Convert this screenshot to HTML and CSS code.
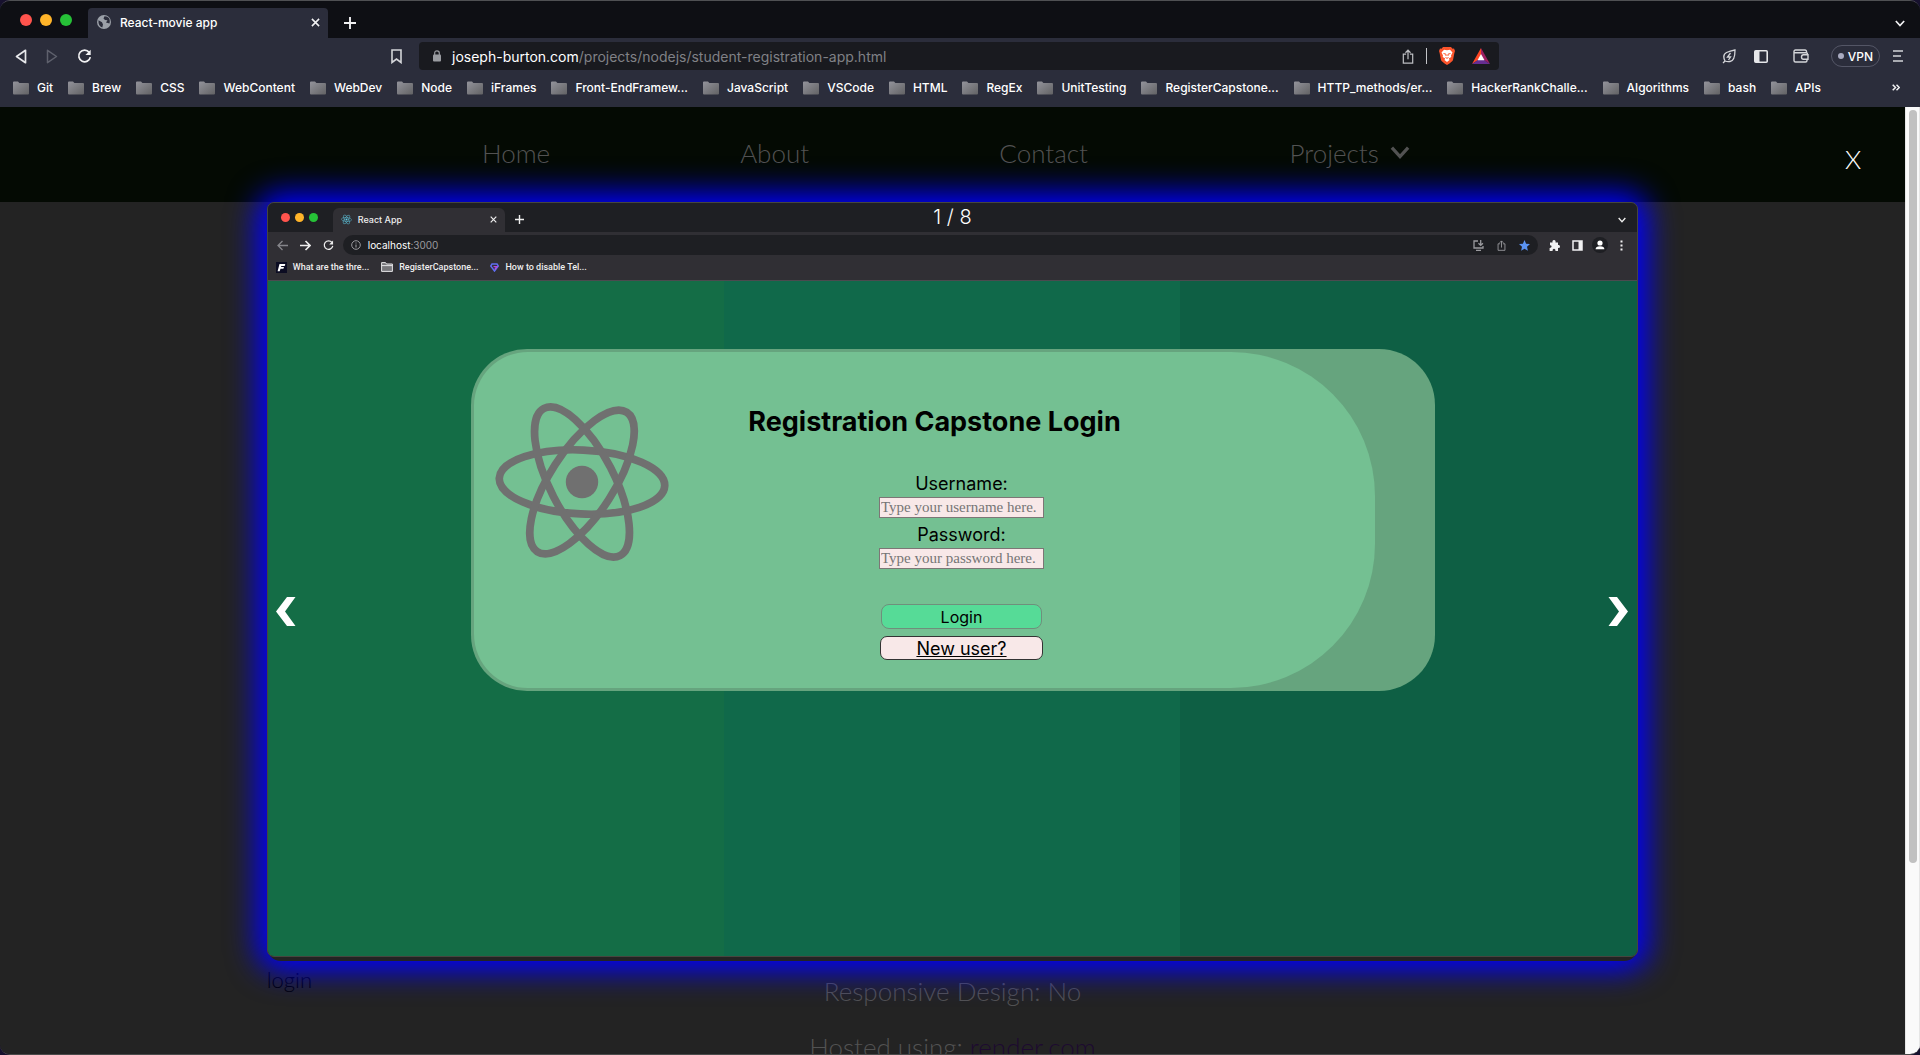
FILE: index.html
```html
<!DOCTYPE html>
<html lang="en">
<head>
<meta charset="utf-8">
<title>React-movie app</title>
<link rel="stylesheet" href="styles.css">
</head>
<body>
<svg class="defs" aria-hidden="true">
  <defs>
    <linearGradient id="folder-fill" x1="0" y1="0" x2="1" y2="1"><stop offset="0" stop-color="#93939b"/><stop offset="1" stop-color="#626264"/></linearGradient>
    <symbol id="folder" viewBox="0 0 16 14"><path d="M0 1.6Q0 .6 1 .6H5L6.4 2H15Q16 2 16 3V12.600Q16 13.600 15 13.600H1Q0 13.600 0 12.600Z" fill="url(#folder-fill)"/></symbol>
    <symbol id="close" viewBox="0 0 10 10"><path d="M1 1 9 9M9 1 1 9" stroke="currentColor" stroke-width="1.700" fill="none"/></symbol>
    <symbol id="plus" viewBox="0 0 12 12"><path d="M6 0V12M0 6H12" stroke="currentColor" stroke-width="1.900"/></symbol>
    <symbol id="chevron" viewBox="0 0 12 8"><path d="M1 1 6 6.500 11 1" stroke="currentColor" stroke-width="2" fill="none"/></symbol>
    <symbol id="reload" viewBox="0 0 16 16"><path d="M13 3.600A6.200 6.200 0 1 0 14.200 8.600" stroke="currentColor" stroke-width="1.800" fill="none"/><path d="M14.600 .8V6.400H9Z" fill="currentColor"/></symbol>
    <symbol id="share" viewBox="0 0 12 16"><path d="M4 5.500H1V15H11V5.500H8M6 11V1.500M3.300 4 6 1.300 8.700 4" stroke="currentColor" stroke-width="1.300" fill="none"/></symbol>
    <symbol id="atom" viewBox="-90 -90 180 180"><g transform="rotate(2.700)" fill="none" stroke="currentColor" stroke-width="7.700"><ellipse rx="82.800" ry="32"/><ellipse rx="82.800" ry="32" transform="rotate(60)"/><ellipse rx="82.800" ry="32" transform="rotate(120)"/></g><circle r="16.200" fill="currentColor"/></symbol>
  </defs>
</svg>
<div class="window">
  <header class="chrome">
    <div class="tabs">
      <div class="lights"><i class="red"></i><i class="amber"></i><i class="green"></i></div>
      <div class="tab">
        <svg width="14" height="14" viewBox="0 0 14 14"><circle cx="7" cy="7" r="7" fill="#9ba0a8"/><path d="M1.500 5.200 5 7.300 6 9.500 5.300 12.400Q1 11 1.500 5.200ZM7.500 1.200 6.500 3.500 8 5 10.500 5.300 9 7.500 12.500 8.500Q13.500 4 11 2.200Q9.500 1.200 7.500 1.200Z" fill="#2b2d3b"/></svg>
        <span>React-movie app</span>
        <button class="icon" aria-label="Close tab"><svg width="9" height="9"><use href="#close"/></svg></button>
      </div>
      <button class="icon new-tab" aria-label="New tab"><svg width="12" height="12"><use href="#plus"/></svg></button>
      <button class="icon tab-search" aria-label="Search tabs"><svg width="10" height="7"><use href="#chevron"/></svg></button>
    </div>
    <div class="toolbar">
      <div class="history">
        <button class="icon" aria-label="Back"><svg width="12" height="15" viewBox="0 0 12 15"><path d="M10.500 1.300V13.700L1.500 7.500Z" fill="none" stroke="#e6e7ea" stroke-width="1.700" stroke-linejoin="round"/></svg></button>
        <button class="icon" aria-label="Forward"><svg width="12" height="15" viewBox="0 0 12 15"><path d="M1.500 1.300V13.700L10.500 7.500Z" fill="none" stroke="#5e606c" stroke-width="1.500" stroke-linejoin="round"/></svg></button>
        <button class="icon" aria-label="Reload"><svg width="15" height="15"><use href="#reload"/></svg></button>
      </div>
      <button class="icon mark" aria-label="Bookmark"><svg width="11" height="15" viewBox="0 0 11 15"><path d="M1 1H10V13.500L5.500 10 1 13.500Z" fill="none" stroke="#d4d5d9" stroke-width="1.600"/></svg></button>
      <div class="address">
        <svg width="8" height="12" viewBox="0 0 8 12"><rect y="4.500" width="8" height="7" rx="1" fill="#9a9ca1"/><path d="M1.700 5V3Q1.700 .8 4 .8 6.300 .8 6.300 3V5" fill="none" stroke="#9a9ca1" stroke-width="1.200"/></svg>
        <span class="url"><b>joseph-burton.com</b>/projects/nodejs/student-registration-app.html</span>
        <svg class="share" width="12" height="15"><use href="#share"/></svg>
        <i class="rule"></i>
        <svg width="16" height="18" viewBox="0 0 16 18"><path d="M4 0H12L13.500 1.700 15 1.600 16 4 15.400 6 14 13Q13.500 14.500 8 18 2.500 14.500 2 13L.6 6 0 4 1 1.600 2.500 1.700Z" fill="#fb542b"/><path d="M5 2.700 8 3.200 11 2.700 13.500 5.500 12 8.500 12.300 10 9.800 11.500 10.500 13 8 15 5.500 13 6.200 11.500 3.700 10 4 8.500 2.500 5.500Z" fill="#fff"/><path d="M4.500 6.500 7 7.200V9M11.500 6.500 9 7.200V9M6.500 10.500 8 11.300 9.500 10.500" stroke="#fb542b" stroke-width="1" fill="none"/></svg>
        <svg class="bat" width="18" height="16" viewBox="0 0 18 16"><path d="M9 0 0 16 9 10Z" fill="#ff4724"/><path d="M9 0 18 16 9 10Z" fill="#9e1f63"/><path d="M0 16H18L9 10Z" fill="#662d91"/><path d="M9 6 12.500 12.300H5.500Z" fill="#fff"/></svg>
      </div>
      <div class="tools">
        <button class="icon" aria-label="Energy saver"><svg width="14" height="15" viewBox="0 0 14 15"><path d="M1 14 3 12Q0 6 4.500 3.500 8 2 13 1 13 12 8 12.500 5.500 13 3 12M8.500 4 5.500 8H8.500L6.500 11" fill="none" stroke="#d4d5d9" stroke-width="1.300"/></svg></button>
        <button class="icon panel" aria-label="Sidebar"><svg width="14" height="13" viewBox="0 0 14 13"><rect x=".8" y=".8" width="12.400" height="11.400" rx="1" fill="none" stroke="#e6e7ea" stroke-width="1.600"/><rect x="1" y="1" width="4.500" height="11" fill="#e6e7ea"/></svg></button>
        <button class="icon wallet" aria-label="Wallet"><svg width="16" height="14" viewBox="0 0 16 14"><path d="M13.500 4V2.500Q13.500 1 12 1H2.500Q1 1 1 2.500V11.500Q1 13 2.500 13H12.500Q14 13 14 11.500V10.500M1.500 3.700H13Q14.500 3.700 14.500 5M15 5.800H10.500Q8.500 5.800 8.500 8T10.500 10.200H15Z" fill="none" stroke="#d4d5d9" stroke-width="1.400"/></svg></button>
        <button class="vpn"><i></i>VPN</button>
        <button class="icon" aria-label="Menu"><svg width="10" height="12" viewBox="0 0 10 12"><path d="M0 1H10M0 6H8M0 11H10" stroke="#d4d5d9" stroke-width="1.700"/></svg></button>
      </div>
    </div>
    <nav class="bookmarks" aria-label="Bookmarks">
      <a href="#"><svg width="16" height="14"><use href="#folder"/></svg>Git</a>
      <a href="#"><svg width="16" height="14"><use href="#folder"/></svg>Brew</a>
      <a href="#"><svg width="16" height="14"><use href="#folder"/></svg>CSS</a>
      <a href="#"><svg width="16" height="14"><use href="#folder"/></svg>WebContent</a>
      <a href="#"><svg width="16" height="14"><use href="#folder"/></svg>WebDev</a>
      <a href="#"><svg width="16" height="14"><use href="#folder"/></svg>Node</a>
      <a href="#"><svg width="16" height="14"><use href="#folder"/></svg>iFrames</a>
      <a href="#"><svg width="16" height="14"><use href="#folder"/></svg>Front-EndFramew...</a>
      <a href="#"><svg width="16" height="14"><use href="#folder"/></svg>JavaScript</a>
      <a href="#"><svg width="16" height="14"><use href="#folder"/></svg>VSCode</a>
      <a href="#"><svg width="16" height="14"><use href="#folder"/></svg>HTML</a>
      <a href="#"><svg width="16" height="14"><use href="#folder"/></svg>RegEx</a>
      <a href="#"><svg width="16" height="14"><use href="#folder"/></svg>UnitTesting</a>
      <a href="#"><svg width="16" height="14"><use href="#folder"/></svg>RegisterCapstone...</a>
      <a href="#"><svg width="16" height="14"><use href="#folder"/></svg>HTTP_methods/er...</a>
      <a href="#"><svg width="16" height="14"><use href="#folder"/></svg>HackerRankChalle...</a>
      <a href="#"><svg width="16" height="14"><use href="#folder"/></svg>Algorithms</a>
      <a href="#"><svg width="16" height="14"><use href="#folder"/></svg>bash</a>
      <a href="#"><svg width="16" height="14"><use href="#folder"/></svg>APIs</a>
      <button class="icon more" aria-label="More bookmarks"><svg width="8" height="7" viewBox="0 0 8 7"><path d="M.7 .7 3.500 3.500 .7 6.300M4.500 .7 7.300 3.500 4.500 6.300" fill="none" stroke="currentColor" stroke-width="1.500"/></svg></button>
    </nav>
  </header>

  <div class="viewport">
    <div class="page">
      <nav class="site-nav">
        <a href="#">Home</a>
        <a href="#">About</a>
        <a href="#">Contact</a>
        <a href="#">Projects <svg width="20" height="13"><use href="#chevron"/></svg></a>
      </nav>
      <main class="details">
        <p>Responsive Design: No</p>
        <p>Hosted using: <a href="#">render.com</a></p>
      </main>

      <div class="lightbox" role="dialog" aria-label="Screenshots">
        <button class="dismiss">X</button>
        <div class="frame">
          <span class="counter">1 / 8</span>
          <section class="slide">
            <div class="mini-tabs">
              <div class="lights small"><i class="red"></i><i class="amber"></i><i class="green"></i></div>
              <div class="mini-tab">
                <svg class="favicon" width="11" height="11"><use href="#atom"/></svg>
                <span>React App</span>
                <svg width="7" height="7"><use href="#close"/></svg>
              </div>
              <svg class="mini-plus" width="9" height="9"><use href="#plus"/></svg>
              <svg class="mini-search" width="8" height="6"><use href="#chevron"/></svg>
            </div>
            <div class="mini-toolbar">
              <svg class="dim" width="11" height="11" viewBox="0 0 11 11"><path d="M11 5.500H1.500M5.500 1 1 5.500 5.500 10" fill="none" stroke="currentColor" stroke-width="1.300"/></svg>
              <svg width="11" height="11" viewBox="0 0 11 11"><path d="M0 5.500H9.500M5.500 1 10 5.500 5.500 10" fill="none" stroke="currentColor" stroke-width="1.600"/></svg>
              <svg width="11" height="11"><use href="#reload"/></svg>
              <div class="mini-address">
                <svg width="10" height="10" viewBox="0 0 10 10"><circle cx="5" cy="5" r="4.300" fill="none" stroke="currentColor"/><path d="M5 4.500V7.600M5 2.400V3.600" stroke="currentColor" stroke-width="1.100"/></svg>
                <span><b>localhost</b>:3000</span>
                <svg class="install" width="11" height="11" viewBox="0 0 11 11"><path d="M5 1H1V8H10V6M3 10.300H8M7.700 0V5M5.500 3.200 7.700 5.400 9.900 3.200" fill="none" stroke="currentColor" stroke-width="1.300"/></svg>
                <svg width="9" height="11"><use href="#share"/></svg>
                <svg class="star" width="11" height="11" viewBox="0 0 11 11"><path d="M5.500 0 7.100 3.700 11 4.100 8 6.800 8.900 10.700 5.500 8.700 2.100 10.700 3 6.800 0 4.100 3.900 3.700Z" fill="#5a93f3"/></svg>
              </div>
              <svg width="11" height="11" viewBox="0 0 11 11"><path d="M1 2.500H3.500Q3 0 5 0T6.500 2.500H9V5Q11 4.500 11 6.400T9 7.800V11H6.500Q6.500 8.800 5 8.800T3.500 11H.6V8Q2.600 8 2.600 6.600T1 5.200Z" fill="#f1f1f2"/></svg>
              <svg width="11" height="11" viewBox="0 0 11 11"><rect x="1" y="1" width="9" height="9" fill="none" stroke="#f1f1f2" stroke-width="1.500"/><path d="M6.500 1H10V10H6.500Z" fill="#f1f1f2"/></svg>
              <svg class="avatar" width="16" height="16" viewBox="0 0 16 16"><circle cx="8" cy="8" r="8" fill="#1e1f23"/><circle cx="8" cy="6" r="2.600" fill="#fff"/><path d="M3.600 12.200Q3.600 9.300 8 9.300T12.400 12.200Z" fill="#fff"/></svg>
              <svg class="dots" width="3" height="11" viewBox="0 0 3 11"><path d="M.5 .5H2.500V2.500H.5ZM.5 4.500H2.500V6.500H.5ZM.5 8.500H2.500V10.500H.5Z" fill="#f1f1f2"/></svg>
            </div>
            <div class="mini-bookmarks">
              <span><svg width="11" height="11" viewBox="0 0 11 11"><rect width="11" height="11" fill="#0b0c22"/><path d="M3.500 2H9.300L8.700 3.900H5.300L5 4.900H8L7.400 6.700H4.500L3.700 9.300H1.600Z" fill="#fff"/></svg>What are the thre...</span>
              <span><svg width="12" height="10" viewBox="0 0 12 10"><path d="M.6 9.400V.6H4.500L5.500 2H11.400V9.400ZM.6 3.600H11.400" fill="#77777b" stroke="#e4e4e6"/></svg>RegisterCapstone...</span>
              <span><svg width="9" height="9" viewBox="0 0 9 9"><path d="M2 1H7L8.300 3 4.500 8 .7 3Z" fill="none" stroke="#5f6df0" stroke-width="1.500"/><path d="M3.500 3.600H7L4.700 6.500" stroke="#b04be0" stroke-width="1.300" fill="none"/></svg>How to disable Tel...</span>
            </div>
            <div class="screen">
              <div class="card">
                <div class="card-face">
                  <svg class="logo" width="180" height="180"><use href="#atom"/></svg>
                  <div class="login">
                    <h1>Registration Capstone Login</h1>
                    <form>
                      <label for="user">Username:</label>
                      <input id="user" type="text" placeholder="Type your username here.">
                      <label for="pass">Password:</label>
                      <input id="pass" type="password" placeholder="Type your password here.">
                      <button type="button" class="submit">Login</button>
                      <a href="#" class="register">New user?</a>
                    </form>
                  </div>
                </div>
              </div>
            </div>
          </section>
          <button class="arrow prev" aria-label="Previous"><svg width="20" height="29" viewBox="0 0 20 29"><path d="M11 0H19.500L9 14.500 19.500 29H11L0 14.500Z" fill="#fff"/></svg></button>
          <button class="arrow next" aria-label="Next"><svg width="20" height="29" viewBox="0 0 20 29"><path d="M9 0H.5L11 14.500 .5 29H9L20 14.500Z" fill="#fff"/></svg></button>
        </div>
        <p class="caption">login</p>
      </div>
    </div>
    <div class="scrollbar"><i></i></div>
  </div>
</div>
</body>
</html>
```
FILE: styles.css
```css
* { box-sizing: border-box; }
body { margin: 0; background: #17112e; font-family: Inter, "Liberation Sans", sans-serif; }
button { padding: 0; border: 0; background: none; color: inherit; font: inherit; }
a { color: inherit; text-decoration: none; }
b { font-weight: inherit; }
p, h1 { margin: 0; }
svg { display: block; flex: none; }
.defs { position: absolute; width: 0; height: 0; }
.icon { display: flex; align-items: center; justify-content: center; color: #f1f1f3; }

.window { display: flex; flex-direction: column; height: 100vh; border-top: 1px solid #4f5053; border-bottom: 1px solid #4a4a4a; border-radius: 10px; overflow: hidden; }

/* Outer browser */
.chrome { background: #2b2d3b; color: #fff; font-size: 12px; font-weight: 500; }
.tabs { display: flex; align-items: flex-end; height: 37px; padding-left: 20px; padding-right: 15px; background: #0e0f14; }
.lights { display: flex; gap: 8px; width: 68px; height: 24px; }
.lights i { width: 12px; height: 12px; border-radius: 50%; }
.red { background: #ff544d; }
.amber { background: #ffb429; }
.green { background: #26c137; }
.tab { display: flex; align-items: center; gap: 9px; width: 240px; height: 30px; padding: 0 8px 2px 9px; border-radius: 4px 4px 0 0; background: #2b2d3b; }
.tab span { flex: 1; }
.new-tab { width: 44px; height: 30px; }
.tab-search { height: 30px; margin-left: auto; }
.toolbar { display: flex; align-items: center; height: 36px; }
.history { display: flex; gap: 19px; width: 391px; padding-left: 15px; }
.mark { margin-right: 17px; }
.address { display: flex; flex: 0 1 1080px; align-items: center; height: 28px; padding: 0 9px 0 14px; border-radius: 4px; background: #191a1f; }
.url { flex: 1; margin-left: 11px; color: #808186; font-size: 14px; font-weight: 400; }
.url b { color: #fff; }
.share { color: #bcbdc1; }
.rule { width: 1px; height: 16px; margin: 0 12px; background: #c3c4c8; }
.bat { margin-left: 17px; }
.tools { display: flex; align-items: center; margin-left: auto; padding-right: 17px; }
.panel { margin: 0 25px 0 18px; }
.wallet { margin-right: 22px; }
.vpn { display: flex; align-items: center; justify-content: center; gap: 4px; width: 49px; height: 22px; margin-right: 13px; border: 1px solid #545666; border-radius: 11px; }
.vpn i { width: 6px; height: 6px; border-radius: 50%; background: #a9abc0; }
.bookmarks { display: flex; align-items: center; gap: 15px; height: 33px; padding: 0 20px 6px 13px; white-space: nowrap; }
.bookmarks a { display: flex; align-items: center; gap: 8px; }
.more { margin-left: auto; }

/* Page behind the dialog */
.viewport { display: flex; flex: 1; min-height: 0; overflow: hidden; }
.page { position: relative; flex: 1; overflow: hidden; background: #232323; color: #525252; font-family: Lato, sans-serif; font-size: 26px; font-weight: 300; }
.site-nav { display: grid; grid-template-columns: 258fr 259fr 290fr 615fr; align-items: center; height: 95px; padding: 0 0 4px 25.3%; background: #040a03; }
.site-nav a { display: flex; align-items: center; gap: 11px; }
.details { padding-top: 761px; text-align: center; line-height: 56px; }
.details a { color: #1d0a30; }
.scrollbar { width: 15px; padding: 3px 4px; border: solid #e6e6e6; border-width: 0 1px; background: #fafafa; }
.scrollbar i { display: block; width: 8px; height: 80%; margin-left: -1px; border-radius: 4px; background: #c1c1c1; }

/* Slideshow dialog laid over the page */
.lightbox { position: absolute; inset: 0; display: flex; flex-direction: column; align-items: center; }
.dismiss { align-self: flex-end; width: 104px; height: 95px; padding-top: 9px; color: #fff; }
.frame { position: relative; width: 72%; padding-bottom: 4px; border-radius: 14px; box-shadow: 0 0 30px 10px #00f; }
.counter { position: absolute; top: 3px; left: 0; width: 100%; color: #fff; font-family: Inter, sans-serif; font-size: 20px; line-height: 24px; text-align: center; }
.arrow { position: absolute; top: 395px; }
.prev { left: 9px; }
.next { right: 10px; }
.caption { width: 72%; margin-top: 6px; color: #000; font-size: 22px; line-height: 26px; }

.slide { display: flex; flex-direction: column; border: 1px solid #45463f; border-radius: 7px; overflow: hidden; background: #302f34; color: #eee; font-family: Inter, sans-serif; font-size: 9px; font-weight: 500; }
.mini-tabs { display: flex; align-items: flex-end; height: 29px; background: #1e1f23; }
.small { gap: 5px; width: 65px; height: 19px; padding-left: 13px; }
.small i { width: 9px; height: 9px; }
.mini-tab { display: flex; align-items: center; gap: 6px; width: 172px; height: 24px; padding: 0 8px 2px 8px; border-radius: 6px 6px 0 0; background: #302f34; }
.mini-tab span { flex: 1; }
.favicon { color: #61cbe5; }
.mini-plus { margin: 0 0 8px 10px; }
.mini-search { margin: 0 11px 9px auto; }
.mini-toolbar { display: flex; align-items: center; gap: 12px; height: 26px; padding: 0 14px 0 9px; }
.dim { color: #85858a; }
.mini-address { display: flex; flex: 1; align-items: center; gap: 13px; height: 20px; margin: 0 -1px 0 -3px; padding: 0 8px; border-radius: 10px; background: #1e1f23; color: #9a9a9e; font-size: 10px; font-weight: 400; }
.mini-address span { margin-left: -6px; }
.mini-address b { color: #fff; }
.install { margin-left: auto; }
.avatar { margin: 0 -3px; }
.dots { margin-left: 3px; }
.mini-bookmarks { display: flex; gap: 12px; height: 23px; padding: 0 8px; border-bottom: 1px solid #4b4a4f; font-family: Roboto, sans-serif; }
.mini-bookmarks span { display: flex; align-items: center; gap: 6px; height: 18px; }

/* Screen shown in the slide */
.screen { display: flex; align-items: flex-start; justify-content: center; aspect-ratio: 1370 / 675; padding-top: 68px; background: linear-gradient(90deg, #146d46 33.3%, #10694a 33.3% 66.6%, #0e5f44 66.6%); color: #000; }
.card { width: 964px; max-width: 90%; padding: 3px 60px 3px 3px; border-radius: 56px; background: #66a47e; }
.card-face { display: flex; gap: 44px; padding: 40px 0 28px 18px; border-radius: 54px 144px 144px 54px; background: #74c092; }
.logo { color: #707070; }
.login { width: 438px; font-weight: 400; text-align: center; }
.login h1 { height: 64px; padding-top: 13px; font-size: 27px; font-weight: 700; line-height: 34px; white-space: nowrap; }
form { display: flex; flex-direction: column; align-items: center; padding-left: 54px; font-size: 18px; }
form label { height: 30px; line-height: 34px; }
form label[for="user"] { margin-top: 11px; }
form input { width: 165px; height: 21px; padding: 1px; border: 1px solid #7d7676; background: #f8e8e8; font-family: "Liberation Serif", serif; font-size: 15px; }
form input::placeholder { color: #757575; }
.submit { width: 161px; height: 25px; margin: 35px 0 7px; border: 1px solid #6f8f7c; border-radius: 8px; background: #56db97; font-size: 16px; }
.register { width: 163px; height: 24px; border: 1px solid #333; border-radius: 7px; background: #f8e8e8; line-height: 23px; text-decoration: underline; }
```
